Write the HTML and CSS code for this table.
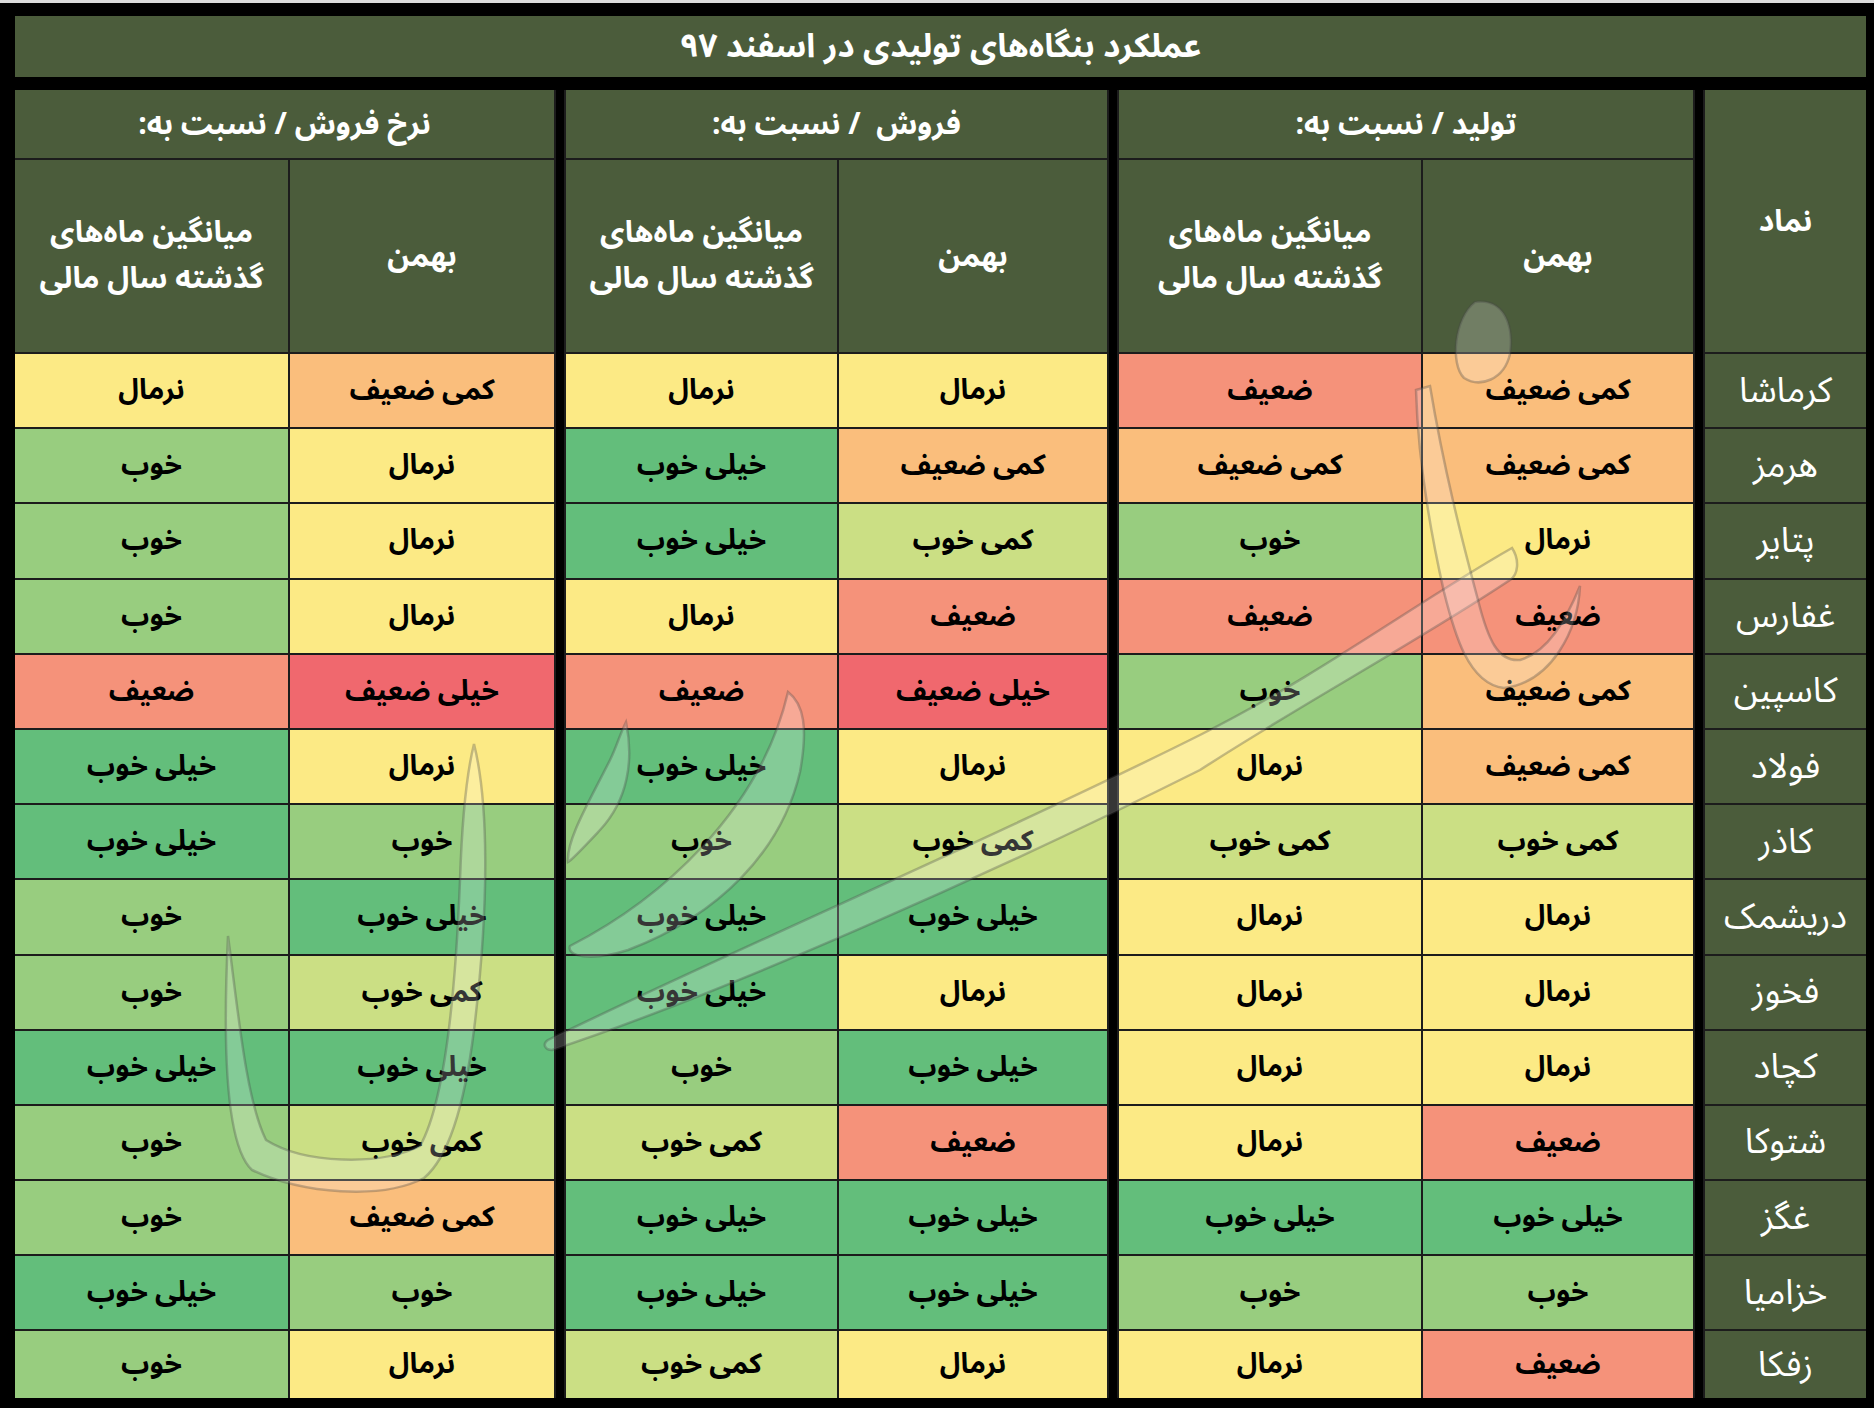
FILE: index.html
```html
<!DOCTYPE html>
<html lang="fa" dir="rtl">
<head>
<meta charset="utf-8">
<title>عملکرد بنگاه‌های تولیدی در اسفند ۹۷</title>
<link rel="stylesheet" href="styles.css">
</head>
<body>
<div class="page">
  <div class="title">عملکرد بنگاه‌های تولیدی در اسفند ۹۷</div>
  <div class="grid">
    <div class="sep s1"></div>
    <div class="sep s2"></div>
    <div class="sep s3"></div>

    <div class="hd sym">نماد</div>
    <div class="hd grp">تولید / نسبت به:</div>
    <div class="hd grp">فروش &nbsp;/ نسبت به:</div>
    <div class="hd grp">نرخ فروش / نسبت به:</div>

    <div class="hd sub">بهمن</div>
    <div class="hd sub"><span class="ln">میانگین ماه‌های</span><span class="ln">گذشته سال مالی</span></div>
    <div class="hd sub">بهمن</div>
    <div class="hd sub"><span class="ln">میانگین ماه‌های</span><span class="ln">گذشته سال مالی</span></div>
    <div class="hd sub">بهمن</div>
    <div class="hd sub"><span class="ln">میانگین ماه‌های</span><span class="ln">گذشته سال مالی</span></div>

    <div class="name">کرماشا</div>
    <div class="c sw">کمی ضعیف</div><div class="c w">ضعیف</div><div class="c n">نرمال</div><div class="c n">نرمال</div><div class="c sw">کمی ضعیف</div><div class="c n">نرمال</div>

    <div class="name">هرمز</div>
    <div class="c sw">کمی ضعیف</div><div class="c sw">کمی ضعیف</div><div class="c sw">کمی ضعیف</div><div class="c vg">خیلی خوب</div><div class="c n">نرمال</div><div class="c g">خوب</div>

    <div class="name">پتایر</div>
    <div class="c n">نرمال</div><div class="c g">خوب</div><div class="c sg">کمی خوب</div><div class="c vg">خیلی خوب</div><div class="c n">نرمال</div><div class="c g">خوب</div>

    <div class="name">غفارس</div>
    <div class="c w">ضعیف</div><div class="c w">ضعیف</div><div class="c w">ضعیف</div><div class="c n">نرمال</div><div class="c n">نرمال</div><div class="c g">خوب</div>

    <div class="name">کاسپین</div>
    <div class="c sw">کمی ضعیف</div><div class="c g">خوب</div><div class="c vw">خیلی ضعیف</div><div class="c w">ضعیف</div><div class="c vw">خیلی ضعیف</div><div class="c w">ضعیف</div>

    <div class="name">فولاد</div>
    <div class="c sw">کمی ضعیف</div><div class="c n">نرمال</div><div class="c n">نرمال</div><div class="c vg">خیلی خوب</div><div class="c n">نرمال</div><div class="c vg">خیلی خوب</div>

    <div class="name">کاذر</div>
    <div class="c sg">کمی خوب</div><div class="c sg">کمی خوب</div><div class="c sg">کمی خوب</div><div class="c g">خوب</div><div class="c g">خوب</div><div class="c vg">خیلی خوب</div>

    <div class="name">دریشمک</div>
    <div class="c n">نرمال</div><div class="c n">نرمال</div><div class="c vg">خیلی خوب</div><div class="c vg">خیلی خوب</div><div class="c vg">خیلی خوب</div><div class="c g">خوب</div>

    <div class="name">فخوز</div>
    <div class="c n">نرمال</div><div class="c n">نرمال</div><div class="c n">نرمال</div><div class="c vg">خیلی خوب</div><div class="c sg">کمی خوب</div><div class="c g">خوب</div>

    <div class="name">کچاد</div>
    <div class="c n">نرمال</div><div class="c n">نرمال</div><div class="c vg">خیلی خوب</div><div class="c g">خوب</div><div class="c vg">خیلی خوب</div><div class="c vg">خیلی خوب</div>

    <div class="name">شتوکا</div>
    <div class="c w">ضعیف</div><div class="c n">نرمال</div><div class="c w">ضعیف</div><div class="c sg">کمی خوب</div><div class="c sg">کمی خوب</div><div class="c g">خوب</div>

    <div class="name">غگز</div>
    <div class="c vg">خیلی خوب</div><div class="c vg">خیلی خوب</div><div class="c vg">خیلی خوب</div><div class="c vg">خیلی خوب</div><div class="c sw">کمی ضعیف</div><div class="c g">خوب</div>

    <div class="name">خزامیا</div>
    <div class="c g">خوب</div><div class="c g">خوب</div><div class="c vg">خیلی خوب</div><div class="c vg">خیلی خوب</div><div class="c g">خوب</div><div class="c vg">خیلی خوب</div>

    <div class="name">زفکا</div>
    <div class="c w">ضعیف</div><div class="c n">نرمال</div><div class="c n">نرمال</div><div class="c sg">کمی خوب</div><div class="c n">نرمال</div><div class="c g">خوب</div>
  </div>
</div>

<svg class="watermark" viewBox="0 0 1874 1408" width="1874" height="1408" aria-hidden="true">
  <g fill="rgba(255,255,255,0.21)" stroke="rgba(70,70,70,0.32)" stroke-width="2.5">
    <path d="M548 1040 C700 965 1000 835 1200 735 C1320 675 1420 600 1512 548 C1520 560 1518 575 1510 580 C1420 640 1300 705 1200 770 C1000 870 720 995 552 1050 C545 1050 542 1044 548 1040 Z"/>
    <path d="M1475 302 C1504 298 1514 325 1510 354 C1504 380 1480 388 1464 378 C1450 364 1454 318 1475 302 Z"/>
    <path d="M1430 386 C1444 470 1462 540 1478 600 C1488 640 1498 662 1520 660 C1548 652 1566 620 1580 586 C1578 630 1552 682 1504 688 C1468 684 1454 632 1444 592 C1430 530 1418 460 1416 390 Z"/>
    <path d="M788 692 C804 704 808 728 800 772 C782 850 720 915 628 950 C590 962 566 956 570 946 C660 900 760 812 788 692 Z"/>
    <path d="M626 722 C634 760 628 800 600 830 C585 846 572 860 568 862 C566 840 590 800 610 760 C616 748 620 734 626 722 Z"/>
    <path d="M474 744 C488 800 490 900 474 1030 C464 1110 448 1158 424 1178 C382 1200 302 1194 252 1170 C228 1148 222 1060 228 936 C238 1010 246 1100 266 1140 C304 1164 380 1166 420 1146 C446 1100 456 980 460 880 C462 820 466 776 474 744 Z"/>
  </g>
</svg>
</body>
</html>
```

FILE: styles.css
```css
html, body {
  margin: 0;
  padding: 0;
}

body {
  position: relative;
  width: 1874px;
  height: 1408px;
  overflow: hidden;
  background: #000;
  font-family: "Noto Sans Arabic", "Noto Naskh Arabic", "DejaVu Sans", "Noto Sans", sans-serif;
  direction: rtl;
}

.page {
  border-top: 3px solid #dcdcdc;
  padding: 13px 8px 0 15px;
}

.title {
  height: 61px;
  background: #4b5c3b;
  color: #fff;
  font-weight: bold;
  font-size: 33px;
  display: flex;
  align-items: center;
  justify-content: center;
  margin-bottom: 13px;
}

.grid {
  display: grid;
  direction: rtl;
  grid-template-columns: 161px 8px 270px 302px 8px 268px 271px 8px 264px 273px;
  grid-template-rows: 68px 192px repeat(13, 73.2px) 67px;
  gap: 2px;
  background: #1c1c1c;
}

.sep {
  grid-row: 1 / -1;
  background: #000;
}
.s1 { grid-column: 2; }
.s2 { grid-column: 5; }
.s3 { grid-column: 8; }

.hd {
  background: #4b5c3b;
  color: #fff;
  font-weight: bold;
  display: flex;
  align-items: center;
  justify-content: center;
  text-align: center;
}

.sym {
  grid-row: span 2;
  font-size: 30px;
}

.grp {
  grid-column: span 2;
  font-size: 30px;
}

.sub {
  font-size: 30px;
  flex-direction: column;
}

.ln {
  display: block;
  height: 46px;
  line-height: 46px;
}

.name {
  background: #4b5c3b;
  color: #fff;
  font-size: 35px;
  display: flex;
  align-items: center;
  justify-content: center;
}

.c {
  display: flex;
  align-items: center;
  justify-content: center;
  color: #000;
  font-weight: bold;
  font-size: 28px;
}

.vw { background: #f0686e; }
.w  { background: #f5927a; }
.sw { background: #fabe7c; }
.n  { background: #fcea85; }
.sg { background: #cbdf84; }
.g  { background: #98cd7f; }
.vg { background: #63be7b; }

.watermark {
  position: absolute;
  top: 0;
  left: 0;
  pointer-events: none;
}
```
